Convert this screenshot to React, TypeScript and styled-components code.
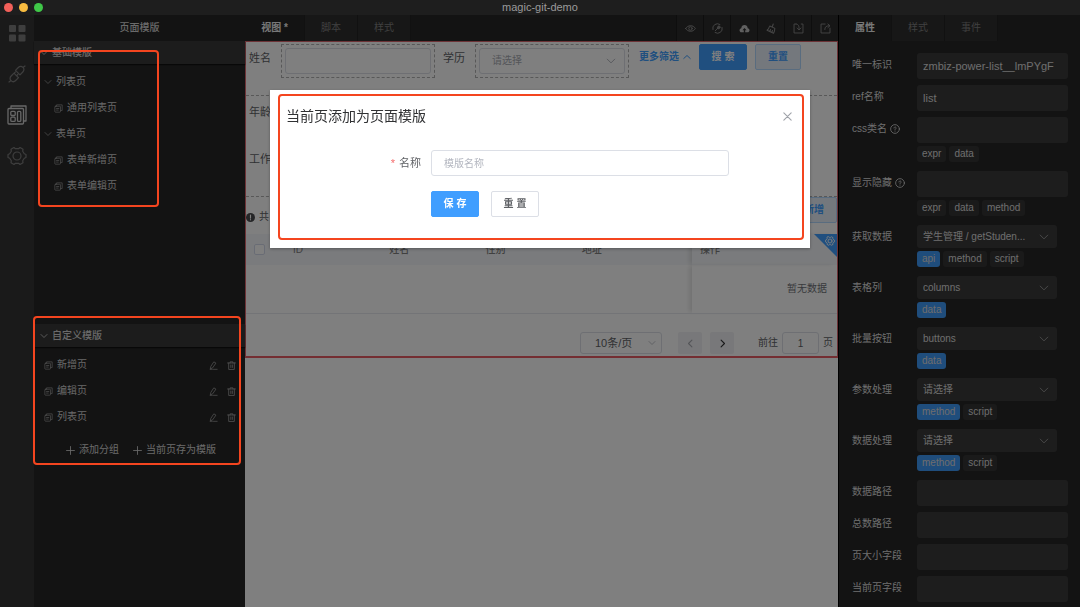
import React from "react";
import styled, { createGlobalStyle, css } from "styled-components";

const Global = createGlobalStyle`
  *, *::before, *::after { box-sizing: border-box; }
  html, body, #root { height: 100%; }
  body {
    margin: 0;
    overflow: hidden;
    background: #000;
    font-family: "Liberation Sans", "Noto Sans CJK SC", sans-serif;
    font-size: 10px;
    line-height: 16px;
  }
  button, input, select {
    font: inherit;
    color: inherit;
    margin: 0;
    padding: 0;
    border: 0;
    background: none;
    outline: none;
  }
  svg { display: block; flex: none; }
`;

const Page = styled.div`
  display: flex;
  flex-direction: column;
  height: 100vh;
`;

const TitleBar = styled.header`
  position: relative;
  z-index: 11;
  display: grid;
  grid-template-columns: 1fr auto 1fr;
  align-items: center;
  height: 15px;
  flex: none;
  background: #1e1e1e;
  color: #9a9a9a;
  font-size: 11px;
  line-height: 13px;
`;

const Lights = styled.div`
  display: flex;
  gap: 6px;
  padding-left: 4px;
`;

const Light = styled.span<{ $color: string }>`
  width: 9px;
  height: 9px;
  border-radius: 50%;
  background: ${(p) => p.$color};
`;

const Workspace = styled.div`
  display: flex;
  flex: 1;
  min-height: 0;
`;

const Rail = styled.nav`
  display: flex;
  flex-direction: column;
  align-items: center;
  gap: 21px;
  width: 34px;
  flex: none;
  padding-top: 8px;
  background: #343434;
`;

const RailButton = styled.button<{ $active?: boolean }>`
  display: flex;
  align-items: center;
  justify-content: center;
  width: 20px;
  height: 20px;
  color: ${(p) => (p.$active ? "#d0d0d0" : "#7c7c7c")};
`;

const LeftPanel = styled.aside`
  position: relative;
  display: flex;
  flex-direction: column;
  width: 211px;
  flex: none;
  background: #262626;
  color: #d4d4d4;
`;

const PanelTitle = styled.h2`
  margin: 0;
  height: 26px;
  flex: none;
  font-size: 10px;
  font-weight: 500;
  line-height: 25px;
  text-align: center;
`;

const Section = styled.section`
  flex: 1;
  min-height: 0;
`;

const SectionHead = styled.h3`
  display: flex;
  align-items: center;
  gap: 4px;
  height: 23px;
  margin: 0 0 5px;
  padding-left: 6px;
  background: #383838;
  box-shadow: 0 1px 1px #111;
  font-size: 10px;
  font-weight: 500;
`;

const TreeRow = styled.div<{ $depth?: number }>`
  display: flex;
  align-items: center;
  gap: 4px;
  height: 26px;
  padding: 0 9px 0 ${(p) => 10 + (p.$depth ?? 0) * 10}px;
  color: #d0d0d0;
  & > svg {
    color: #9c9c9c;
  }
`;

const RowActions = styled.span`
  display: flex;
  gap: 9px;
  margin-left: auto;
  color: #a0a0a0;
`;

const IconButton = styled.button`
  display: flex;
  align-items: center;
  justify-content: center;
`;

const AddRow = styled.div`
  display: flex;
  gap: 14px;
  padding: 12px 0 0 32px;
`;

const AddButton = styled.button`
  display: flex;
  align-items: center;
  gap: 4px;
`;

const Callout = styled.div<{ $area: string; $height?: number }>`
  position: absolute;
  inset: ${(p) => p.$area};
  z-index: 20;
  height: ${(p) => (p.$height ? `${p.$height}px` : "auto")};
  border: 2px solid #f4451f;
  border-radius: 4px;
  pointer-events: none;
`;

const Center = styled.main`
  display: flex;
  flex-direction: column;
  flex: 1;
  min-width: 0;
  background: #fff;
`;

const TabBar = styled.div`
  display: flex;
  height: 26px;
  flex: none;
  background: #262626;
`;

const Tab = styled.button<{ $active?: boolean; $wide?: boolean }>`
  width: ${(p) => (p.$wide ? 60 : 53)}px;
  padding-bottom: 1px;
  border-right: 1px solid #222;
  color: ${(p) => (p.$active ? "#f0f0f0" : "#808080")};
  background: ${(p) => (p.$active ? "#262626" : "#2e2e2e")};
  font-weight: ${(p) => (p.$active ? 700 : 400)};
`;

const Tools = styled.div`
  display: flex;
  margin-left: auto;
`;

const Tool = styled.button`
  display: flex;
  align-items: center;
  justify-content: center;
  width: 27px;
  border-left: 1px solid #1c1c1c;
  background: #2c2c2c;
  color: #8e8e8e;
`;

const Canvas = styled.div`
  border: 1px solid #d8646c;
  border-bottom: 2px solid #e85c64;
  color: #606266;
`;

const Filters = styled.form`
  border-bottom: 1px dashed #b0b0b0;
`;

const FilterLabel = styled.label`
  width: 32px;
  flex: none;
  font-size: 11px;
  line-height: 28px;
`;

const DropBox = styled.div`
  flex: 1;
  min-width: 0;
  height: 34px;
  margin-right: 8px;
  padding: 3px;
  border: 1px dashed #b0b0b0;
`;

const outlined = css`
  border: 1px solid #dcdfe6;
  border-radius: 3px;
  background: transparent;
`;

const LightInput = styled.input`
  ${outlined}
  display: block;
  width: 100%;
  height: 26px;
  padding: 0 10px;
`;

const SelectWrap = styled.div`
  position: relative;
  display: flex;
  align-items: center;
  & > svg {
    position: absolute;
    right: 9px;
    color: #b0b3bb;
    pointer-events: none;
  }
`;

const LightSelect = styled.select`
  ${outlined}
  appearance: none;
  width: 100%;
  height: 26px;
  padding: 0 12px;
  color: #a8abb2;
`;

const MoreLink = styled.button`
  display: flex;
  align-items: center;
  gap: 4px;
  height: 26px;
  margin: 0 8px 0 2px;
  color: #409eff;
  font-weight: 700;
`;

const Button = styled.button<{ $kind?: "primary" | "plain" }>`
  min-width: 48px;
  height: 26px;
  border: 1px solid #dcdfe6;
  border-radius: 2px;
  background: #fff;
  color: #606266;
  font-weight: 700;
  ${(p) =>
    p.$kind === "primary" &&
    css`
      border-color: #409eff;
      background: #409eff;
      color: #fff;
    `}
  ${(p) =>
    p.$kind === "plain" &&
    css`
      min-width: 46px;
      border-color: #b3d8ff;
      background: #e8f1fb;
      color: #409eff;
    `}
`;

const FilterRow = styled.div`
  display: flex;
  align-items: flex-start;
  height: 54px;
  padding: 2px 36px 0 3px;
  border-bottom: 1px dashed #b0b0b0;
  ${Button} + ${Button} {
    margin-left: 8px;
  }
`;

const MoreFilters = styled.div`
  display: grid;
  align-content: start;
  gap: 31px;
  height: 100px;
  padding: 8px 3px;
  font-size: 11px;
`;

const Summary = styled.div`
  display: flex;
  align-items: flex-start;
  justify-content: space-between;
  height: 37px;
`;

const Total = styled.span`
  display: flex;
  align-items: center;
  gap: 4px;
  padding-top: 12px;
`;

const TableBox = styled.div`
  position: relative;
`;

const edgeShadow = css`
  box-shadow: -4px 0 4px -1px rgba(0, 0, 0, 0.1);
`;

const Table = styled.table`
  width: 100%;
  table-layout: fixed;
  border-collapse: collapse;
  th {
    height: 31px;
    padding: 0 8px;
    background: #f5f7fa;
    color: #808080;
    font-weight: 500;
    text-align: left;
  }
  td {
    height: 48px;
    padding: 0 10px;
    border-bottom: 1px solid #e6e8ee;
    color: #707278;
    text-align: right;
  }
`;

const Col = styled.col<{ $width?: string }>`
  width: ${(p) => p.$width ?? "auto"};
`;

const FixedHead = styled.th`
  ${edgeShadow}
`;

const FixedCell = styled.td`
  ${edgeShadow}
`;

const CheckBox = styled.input`
  display: block;
  appearance: none;
  width: 11px;
  height: 11px;
  border: 1px solid #d3d9ea;
  border-radius: 2px;
  background: #fff;
`;

const Corner = styled.button`
  position: absolute;
  top: 0;
  right: 0;
  display: flex;
  align-items: flex-start;
  justify-content: flex-end;
  width: 23px;
  height: 23px;
  padding: 2px;
  background: #409eff;
  clip-path: polygon(0 0, 100% 0, 100% 100%);
  color: #fff;
`;

const Pager = styled.div`
  display: flex;
  align-items: center;
  justify-content: flex-end;
  height: 42px;
  padding: 17px 4px 0 0;
`;

const PageSize = styled(SelectWrap)`
  width: 82px;
  margin-right: 16px;
  & > svg {
    right: 6px;
  }
  select {
    height: 22px;
    padding: 0 14px;
    color: #606266;
    font-size: 11px;
  }
`;

const PageButton = styled.button`
  display: flex;
  align-items: center;
  justify-content: center;
  width: 24px;
  height: 22px;
  margin-right: 8px;
  border-radius: 2px;
  background: #f1f1f4;
  color: #303133;
  &:disabled {
    color: #a8abb2;
  }
`;

const JumpLabel = styled.label`
  display: flex;
  align-items: center;
  gap: 4px;
  margin-left: 16px;
  input {
    width: 37px;
    height: 22px;
    text-align: center;
  }
`;

const RightPanel = styled.aside`
  display: flex;
  flex-direction: column;
  width: 242px;
  flex: none;
  border-left: 1px solid #000;
  background: #262626;
  color: #dcdcdc;
`;

const Props = styled.form`
  flex: 1;
  min-height: 0;
  padding: 12px 12px 0 13px;
  overflow: hidden;
`;

const Field = styled.div<{ $chips?: boolean }>`
  display: grid;
  grid-template-columns: 65px minmax(0, 1fr);
  margin-bottom: ${(p) => (p.$chips ? 9 : 6)}px;
`;

const FieldLabel = styled.label`
  display: flex;
  align-items: center;
  gap: 3px;
  height: 23px;
  white-space: nowrap;
`;

const DarkInput = styled.input`
  display: block;
  width: 100%;
  height: 26px;
  padding: 0 12px 0 6px;
  border-radius: 3px;
  background: #3b3b3b;
  font-size: 11px;
`;

const DarkSelectWrap = styled(SelectWrap)`
  margin-right: 11px;
  & > svg {
    right: 8px;
    color: #909090;
  }
`;

const DarkSelect = styled.select`
  appearance: none;
  width: 100%;
  height: 23px;
  padding: 1px 24px 0 6px;
  border-radius: 3px;
  background: #3b3b3b;
  text-overflow: ellipsis;
`;

const Chips = styled.div`
  display: flex;
  gap: 3px;
  margin-top: 3px;
`;

const Chip = styled.button<{ $on?: boolean }>`
  height: 16px;
  padding: 0 5px;
  border-radius: 3px;
  background: ${(p) => (p.$on ? "#3f9af8" : "#353535")};
`;

const Overlay = styled.div`
  position: fixed;
  inset: 15px 0 0;
  z-index: 10;
  display: flex;
  align-items: flex-start;
  justify-content: center;
  background: rgba(0, 0, 0, 0.5);
`;

const Dialog = styled.section`
  position: relative;
  width: 50%;
  margin-top: 75px;
  padding: 16px;
  padding-bottom: 31px;
  background: #fff;
  box-shadow: 0 1px 3px rgba(0, 0, 0, 0.3);
  color: #606266;
`;

const DialogHead = styled.header`
  display: flex;
  align-items: center;
  justify-content: space-between;
  margin-bottom: 24px;
  h1 {
    margin: 0;
    color: #303133;
    font-size: 14px;
    font-weight: 400;
    line-height: 20px;
  }
  button {
    padding: 0 2px;
    color: #a0a3a9;
  }
`;

const DialogForm = styled.form`
  display: grid;
  grid-template-columns: 145px 1fr;
  row-gap: 15px;
  padding-right: 65px;
`;

const NameLabel = styled.label`
  padding-right: 10px;
  font-size: 11px;
  line-height: 26px;
  text-align: right;
  &::before {
    content: "*";
    margin-right: 4px;
    color: #f56c6c;
  }
`;

const NameInput = styled(LightInput)`
  padding: 0 12px;
  &::placeholder {
    color: #b4b7c0;
    opacity: 1;
  }
`;

const DialogButtons = styled.div`
  display: flex;
  gap: 12px;
  grid-column: 2;
`;

type SvgProps = { size?: number; w?: number; children: React.ReactNode; box?: number };
const Svg = ({ size = 10, w = 1, box = 16, children }: SvgProps) => (
  <svg
    width={size}
    height={size}
    viewBox={`0 0 ${box} ${box}`}
    fill="none"
    stroke="currentColor"
    strokeWidth={w}
    strokeLinecap="round"
    strokeLinejoin="round"
    aria-hidden="true"
  >
    {children}
  </svg>
);

const Down = ({ size = 10 }: { size?: number }) => (
  <Svg size={size} w={1.6}>
    <path d="M2 5l6 6 6-6" />
  </Svg>
);
const Up = () => (
  <Svg size={8} w={2}>
    <path d="M1.500 11L8 5l6.500 6" />
  </Svg>
);
const Copy = () => (
  <Svg size={9} w={1.3}>
    <path d="M4.500 4V1.500h10v10H12" />
    <rect x="1.500" y="4" width="10" height="10.500" rx="1" />
    <path d="M4.500 8h4M4.500 10.800h3" />
  </Svg>
);
const Pen = () => (
  <Svg size={9} w={1.4}>
    <path d="M2.500 13.500l.8-4L8.500 1.500l3.800 2.200L7 11.500zM2 14.800h4M8 14.800h6.500" />
  </Svg>
);
const Trash = () => (
  <Svg size={9} w={1.5}>
    <path d="M1 3.500h14M5.500 3.500v-2h5v2M3 3.500v11.500h10V3.500M6.800 7v4.500M9.500 7v4.500" />
  </Svg>
);
const Plus = () => (
  <Svg size={9} w={1.5}>
    <path d="M8 1v14M1 8h14" />
  </Svg>
);
const Help = () => (
  <Svg size={10} w={1.3}>
    <circle cx="8" cy="8" r="7" />
    <path d="M6.300 6.400c0-2.400 3.500-2.200 3.500 0C9.800 7.700 8 7.600 8 9.200M8 11.300v.2" />
  </Svg>
);
const Gear = ({ size, w = 1.2 }: { size: number; w?: number }) => (
  <Svg size={size} w={w} box={20}>
    <path d="M7 1.500l1.400 1.200h3.200L13 1.500l3 1.800-.3 1.900 1.600 2.600 1.700.7v3l-1.700.7-1.600 2.600.3 1.900-3 1.800-1.400-1.200H8.400L7 18.500l-3-1.800.3-1.900-1.600-2.600L1 11.500v-3l1.700-.7 1.600-2.600L4 3.300z" />
    <circle cx="10" cy="10" r="4" />
  </Svg>
);

const railIcons = [
  {
    name: "组件",
    icon: (
      <svg width="17" height="17" viewBox="0 0 17 17" fill="currentColor" aria-hidden="true">
        <rect x="0" y="0" width="7" height="7" rx="1" />
        <rect x="9.500" y="0" width="7" height="7" rx="1" />
        <rect x="0" y="9.500" width="7" height="7" rx="1" />
        <rect x="9.500" y="9.500" width="7" height="7" rx="1" />
      </svg>
    ),
  },
  {
    name: "连接",
    icon: (
      <Svg size={18} w={1.2} box={18}>
        <path d="M7.500 5.300L10.300 2.500c1.500-1.500 3.300-1.500 4.600-.2 1.400 1.300 1.400 3.200-.1 4.700L12 9.800zM15.300 2.300L17 1" />
        <path d="M6 8.200L3.200 11c-1.500 1.500-1.500 3.400-.1 4.700 1.300 1.300 3.100 1.300 4.600-.2l2.800-2.800L8.600 10.800l1.200-1.300M8.600 10.800L6 8.200l1.500-1.300M2.700 15.700L1 17" />
      </Svg>
    ),
  },
  {
    name: "页面模版",
    active: true,
    icon: (
      <Svg size={20} w={1.3} box={20}>
        <path d="M4 3.500V1h15v15h-2.500" />
        <rect x="1" y="3.500" width="15.500" height="15.500" rx="1" />
        <rect x="3.800" y="6.300" width="4.400" height="4.200" rx="1" />
        <rect x="3.800" y="12.200" width="4.400" height="4.200" rx="1" />
        <rect x="10.500" y="6.300" width="3.300" height="10.100" rx="1" />
      </Svg>
    ),
  },
  { name: "设置", icon: <Gear size={20} /> },
];

const toolIcons = [
  {
    name: "预览",
    icon: (
      <Svg size={11} w={1.4}>
        <path d="M1 8c3-5.500 11-5.500 14 0-3 5.500-11 5.500-14 0z" />
        <circle cx="8" cy="8" r="2.500" />
      </Svg>
    ),
  },
  {
    name: "调试",
    icon: (
      <Svg size={11} w={1.4}>
        <path d="M1.300 9.500A6.800 6.800 0 0 1 11.500 2.100M14.700 6.500A6.800 6.800 0 0 1 4.500 13.900M4.800 11.200L8 8" />
        <path d="M8 8c-1-2 1-4.200 3-3.600L9.600 6.100l.6.700 1.800-1.200c.3 2-2 3.700-4 2.400z" fill="currentColor" />
      </Svg>
    ),
  },
  {
    name: "上传",
    icon: (
      <svg width="11" height="11" viewBox="0 0 16 16" aria-hidden="true">
        <path
          d="M4 13.500C1.800 13.500.8 12 .8 10.500c0-1.600 1.100-2.700 2.500-3C3.600 4.600 5.500 3 8 3s4.400 1.600 4.700 4.500c1.500.3 2.600 1.400 2.600 3 0 1.500-1.200 3-3.300 3H9v-3h2L8 7.300l-3 3.200h2v3z"
          fill="#c0c0c0"
        />
      </svg>
    ),
  },
  {
    name: "清理",
    icon: (
      <Svg size={11} w={1.5}>
        <path d="M10.500 1.500L9 6M5.500 4.500l7.500 3.300M4.800 5.500C4.500 8 3 9.500 1.500 10.500l9.500 4.300c1.300-2 1.800-4 1.700-6.200M5.500 12l1.200-2.500M8.500 13.300l1-2.300" />
      </Svg>
    ),
  },
  {
    name: "导入",
    icon: (
      <Svg size={11} w={1.3}>
        <path d="M4.500 1.500h-3v13h13v-13H12M4.500 1.500C8 1.800 9 4 8.800 9.500M6 7.300l2.800 2.900 2.700-2.900" />
      </Svg>
    ),
  },
  {
    name: "导出",
    icon: (
      <Svg size={11} w={1.3}>
        <path d="M7.500 1.500h-6v13h13v-7M7 9.500C7 5.500 9 4 13.500 4M11.500 1.500L14.500 4l-3 2.700" />
      </Svg>
    ),
  },
];

type FieldSpec = {
  label: string;
  help?: boolean;
  value?: string;
  select?: string;
  chips?: string[];
  on?: string;
};

const fields: FieldSpec[] = [
  { label: "唯一标识", value: "zmbiz-power-list__lmPYgF" },
  { label: "ref名称", value: "list" },
  { label: "css类名", help: true, chips: ["expr", "data"] },
  { label: "显示隐藏", help: true, chips: ["expr", "data", "method"] },
  { label: "获取数据", select: "学生管理 / getStuden...", chips: ["api", "method", "script"], on: "api" },
  { label: "表格列", select: "columns", chips: ["data"], on: "data" },
  { label: "批量按钮", select: "buttons", chips: ["data"], on: "data" },
  { label: "参数处理", select: "请选择", chips: ["method", "script"], on: "method" },
  { label: "数据处理", select: "请选择", chips: ["method", "script"], on: "method" },
  { label: "数据路径" },
  { label: "总数路径" },
  { label: "页大小字段" },
  { label: "当前页字段" },
];

const PropField = ({ spec, id }: { spec: FieldSpec; id: string }) => (
  <Field $chips={!!spec.chips}>
    <FieldLabel htmlFor={id}>
      {spec.label}
      {spec.help && <Help />}
    </FieldLabel>
    <div>
      {spec.select ? (
        <DarkSelectWrap>
          <DarkSelect id={id}>
            <option>{spec.select}</option>
          </DarkSelect>
          <Down />
        </DarkSelectWrap>
      ) : (
        <DarkInput id={id} defaultValue={spec.value} />
      )}
      {spec.chips && (
        <Chips>
          {spec.chips.map((c) => (
            <Chip key={c} type="button" $on={c === spec.on}>
              {c}
            </Chip>
          ))}
        </Chips>
      )}
    </div>
  </Field>
);

const tree = [
  { name: "列表页", pages: ["通用列表页"] },
  { name: "表单页", pages: ["表单新增页", "表单编辑页"] },
];

export default function App() {
  return (
    <Page>
      <Global />
      <TitleBar>
        <Lights>
          <Light $color="#f2605a" />
          <Light $color="#f8bc40" />
          <Light $color="#3fc748" />
        </Lights>
        <span>magic-git-demo</span>
      </TitleBar>

      <Workspace>
        <Rail>
          {railIcons.map((r) => (
            <RailButton key={r.name} $active={r.active} aria-label={r.name}>
              {r.icon}
            </RailButton>
          ))}
        </Rail>

        <LeftPanel>
          <PanelTitle>页面模版</PanelTitle>
          <Section>
            <SectionHead>
              <Down size={8} />
              基础模版
            </SectionHead>
            {tree.map((group) => (
              <React.Fragment key={group.name}>
                <TreeRow>
                  <Down size={8} />
                  {group.name}
                </TreeRow>
                {group.pages.map((page) => (
                  <TreeRow key={page} $depth={1}>
                    <Copy />
                    {page}
                  </TreeRow>
                ))}
              </React.Fragment>
            ))}
          </Section>
          <Section>
            <SectionHead>
              <Down size={8} />
              自定义模版
            </SectionHead>
            {["新增页", "编辑页", "列表页"].map((page) => (
              <TreeRow key={page}>
                <Copy />
                {page}
                <RowActions>
                  <IconButton aria-label="编辑">
                    <Pen />
                  </IconButton>
                  <IconButton aria-label="删除">
                    <Trash />
                  </IconButton>
                </RowActions>
              </TreeRow>
            ))}
            <AddRow>
              <AddButton>
                <Plus />
                添加分组
              </AddButton>
              <AddButton>
                <Plus />
                当前页存为模版
              </AddButton>
            </AddRow>
          </Section>
          <Callout $area="35px 86px auto 4px" $height={157} />
          <Callout $area="301px 4px auto -1px" $height={149} />
        </LeftPanel>

        <Center>
          <TabBar>
            <Tab $active $wide>
              视图 *
            </Tab>
            <Tab>脚本</Tab>
            <Tab>样式</Tab>
            <Tools>
              {toolIcons.map((t) => (
                <Tool key={t.name} aria-label={t.name}>
                  {t.icon}
                </Tool>
              ))}
            </Tools>
          </TabBar>
          <Canvas>
            <Filters>
              <FilterRow>
                <FilterLabel htmlFor="f-name">姓名</FilterLabel>
                <DropBox>
                  <LightInput id="f-name" />
                </DropBox>
                <FilterLabel htmlFor="f-edu">学历</FilterLabel>
                <DropBox>
                  <SelectWrap>
                    <LightSelect id="f-edu">
                      <option>请选择</option>
                    </LightSelect>
                    <Down />
                  </SelectWrap>
                </DropBox>
                <MoreLink type="button">
                  更多筛选
                  <Up />
                </MoreLink>
                <Button type="button" $kind="primary">
                  搜 索
                </Button>
                <Button type="button" $kind="plain">
                  重置
                </Button>
              </FilterRow>
              <MoreFilters>
                <span>年龄</span>
                <span>工作</span>
              </MoreFilters>
            </Filters>
            <Summary>
              <Total>
                <svg width="9" height="9" viewBox="0 0 16 16" aria-hidden="true">
                  <circle cx="8" cy="8" r="8" fill="#4a4b4e" />
                  <path d="M8 3.500v5.500M8 11.800v.4" stroke="#fff" strokeWidth="2" strokeLinecap="round" />
                </svg>
                共
              </Total>
              <Button type="button" $kind="plain">
                新增
              </Button>
            </Summary>
            <TableBox>
              <Table>
                <colgroup>
                  <Col $width="39px" />
                  <Col />
                  <Col />
                  <Col />
                  <Col $width="20%" />
                  <Col $width="145px" />
                </colgroup>
                <thead>
                  <tr>
                    <th>
                      <CheckBox type="checkbox" aria-label="全选" />
                    </th>
                    <th>ID</th>
                    <th>姓名</th>
                    <th>性别</th>
                    <th>地址</th>
                    <FixedHead>操作</FixedHead>
                  </tr>
                </thead>
                <tbody>
                  <tr>
                    <td colSpan={5} />
                    <FixedCell>暂无数据</FixedCell>
                  </tr>
                </tbody>
              </Table>
              <Corner aria-label="表格设置">
                <Gear size={10} w={1.8} />
              </Corner>
            </TableBox>
            <Pager>
              <PageSize>
                <LightSelect aria-label="每页条数">
                  <option>10条/页</option>
                </LightSelect>
                <Down size={8} />
              </PageSize>
              <PageButton disabled aria-label="上一页">
                <Svg size={9} w={2}>
                  <path d="M10.500 2l-6 6 6 6" />
                </Svg>
              </PageButton>
              <PageButton aria-label="下一页">
                <Svg size={9} w={2}>
                  <path d="M5.500 2l6 6-6 6" />
                </Svg>
              </PageButton>
              <JumpLabel>
                前往
                <LightInput defaultValue="1" />页
              </JumpLabel>
            </Pager>
          </Canvas>
        </Center>

        <RightPanel>
          <TabBar>
            <Tab $active>属性</Tab>
            <Tab>样式</Tab>
            <Tab>事件</Tab>
          </TabBar>
          <Props>
            {fields.map((f, i) => (
              <PropField key={f.label} spec={f} id={`prop-${i}`} />
            ))}
          </Props>
        </RightPanel>
      </Workspace>

      <Overlay>
        <Dialog role="dialog" aria-labelledby="dialog-title">
          <DialogHead>
            <h1 id="dialog-title">当前页添加为页面模版</h1>
            <button aria-label="关闭">
              <Svg size={9} w={2}>
                <path d="M1.500 1.500l13 13M14.500 1.500l-13 13" />
              </Svg>
            </button>
          </DialogHead>
          <DialogForm>
            <NameLabel htmlFor="tpl-name">名称</NameLabel>
            <NameInput id="tpl-name" placeholder="模版名称" />
            <DialogButtons>
              <Button type="button" $kind="primary">
                保 存
              </Button>
              <Button type="button">重 置</Button>
            </DialogButtons>
          </DialogForm>
          <Callout $area="4px 6px 8px 8px" />
        </Dialog>
      </Overlay>
    </Page>
  );
}
